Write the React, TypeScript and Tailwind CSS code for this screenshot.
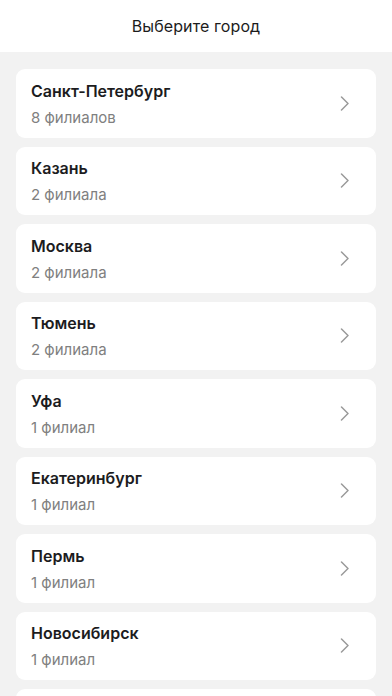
import React from "react";

const cities: [string, string][] = [
  ["Санкт-Петербург", "8 филиалов"],
  ["Казань", "2 филиала"],
  ["Москва", "2 филиала"],
  ["Тюмень", "2 филиала"],
  ["Уфа", "1 филиал"],
  ["Екатеринбург", "1 филиал"],
  ["Пермь", "1 филиал"],
  ["Новосибирск", "1 филиал"],
];

export default function App() {
  return (
    <div
      className="w-[392px] h-[696px] overflow-hidden bg-[#f2f2f2] flex flex-col"
      style={{ fontFamily: "Inter, 'Noto Sans', sans-serif" }}
    >
      <div className="h-[52px] shrink-0 bg-white flex items-center justify-center">
        <span className="text-[16px] text-[#1c1c1c] tracking-[0.1px]">Выберите город</span>
      </div>
      <div className="flex flex-col gap-[9px] px-4 pt-[17px]">
        {cities.map(([name, sub]) => (
          <div
            key={name}
            className="h-[68.5px] shrink-0 bg-white rounded-[9px] flex items-center pl-[15px] pr-[26px]"
          >
            <div className="flex-1 flex flex-col pt-[2px]">
              <span className="text-[16px] font-semibold text-[#1c1c1e] leading-[20px]">{name}</span>
              <span className="text-[15px] text-[#808080] leading-[20px] mt-[7px]">{sub}</span>
            </div>
            <svg width="10" height="15" viewBox="0 0 10 15" fill="none">
              <path d="M1.5 1 L8 7.5 L1.5 14" stroke="#9a9a9a" strokeWidth="1.5" strokeLinecap="round" strokeLinejoin="round" />
            </svg>
          </div>
        ))}
        <div className="h-[68.5px] shrink-0 bg-white rounded-[9px]" />
      </div>
    </div>
  );
}
